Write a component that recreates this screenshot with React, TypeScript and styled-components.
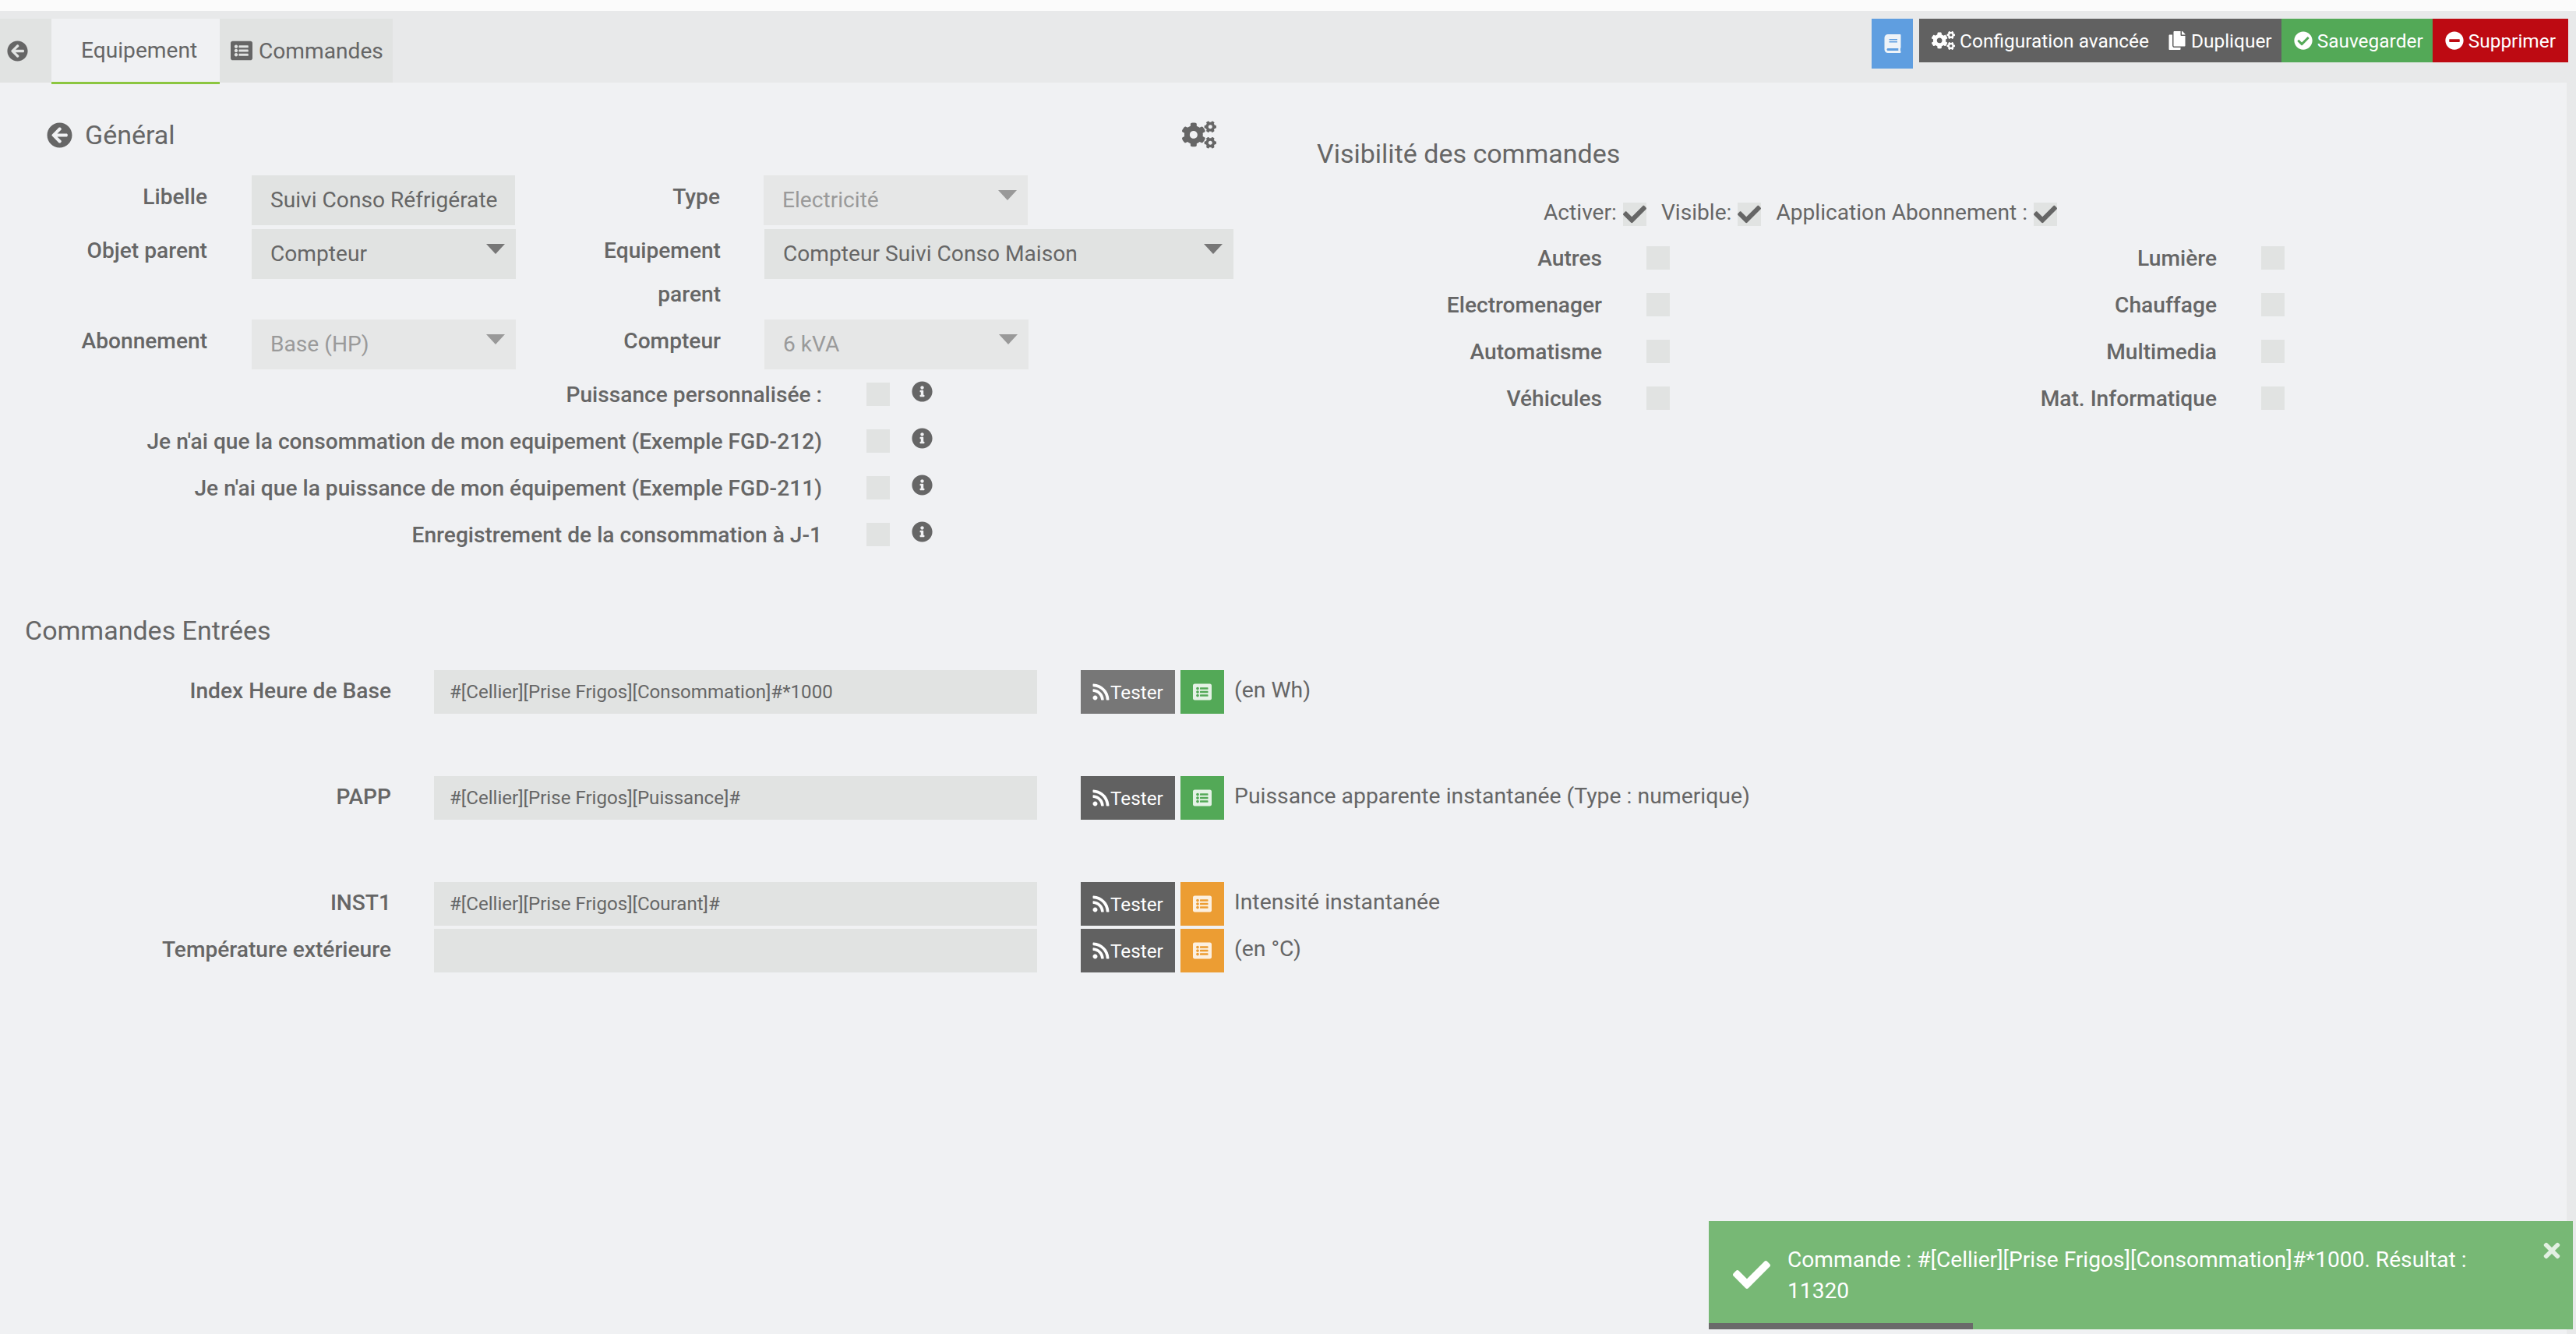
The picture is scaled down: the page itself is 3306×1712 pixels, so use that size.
import React from 'react'
import styled, { createGlobalStyle } from 'styled-components'
import {
    FaArrowCircleLeft, FaBook, FaCheck, FaCheckCircle, FaCogs, FaCopy,
    FaInfoCircle, FaListAlt, FaMinusCircle, FaRss, FaTimes
} from 'react-icons/fa'

const GlobalStyle = createGlobalStyle`
    html, body {
        margin: 0;
        height: 100%;
        overflow: hidden;
        background: #e8e9ea;
        color: #666;
        font-family: Roboto, "Liberation Sans", sans-serif;
        font-size: 28.15px;
    }
    * {
        box-sizing: border-box;
    }
`

const infoRows = [
    'Puissance personnalisée :',
    "Je n'ai que la consommation de mon equipement (Exemple FGD-212)",
    "Je n'ai que la puissance de mon équipement (Exemple FGD-211)",
    'Enregistrement de la consommation à J-1'
]

const visibilityRows = [
    ['Autres', 'Lumière'],
    ['Electromenager', 'Chauffage'],
    ['Automatisme', 'Multimedia'],
    ['Véhicules', 'Mat. Informatique']
]

const commands = [
    { name: 'Index Heure de Base', value: '#[Cellier][Prise Frigos][Consommation]#*1000', help: '(en Wh)', ok: true, spaced: true, hover: true },
    { name: 'PAPP', value: '#[Cellier][Prise Frigos][Puissance]#', help: 'Puissance apparente instantanée (Type : numerique)', ok: true, spaced: true },
    { name: 'INST1', value: '#[Cellier][Prise Frigos][Courant]#', help: 'Intensité instantanée', ok: false },
    { name: 'Température extérieure', value: '', help: '(en °C)', ok: false }
]

const App = () => {
    return (
        <>
            <GlobalStyle />
            <TopStrip />
            <TopBar>
                <Tabs>
                    <BackTab><FaArrowCircleLeft size={27} /></BackTab>
                    <ActiveTab>Equipement</ActiveTab>
                    <Tab><FaListAlt size={28} />Commandes</Tab>
                </Tabs>
                <Actions>
                    <BookButton><FaBook size={24} /></BookButton>
                    <ActionButton $bg="#616161" $right={8}><FaCogs size={30} />Configuration avancée</ActionButton>
                    <ActionButton $bg="#616161"><FaCopy size={24} />Dupliquer</ActionButton>
                    <ActionButton $bg="#53a957"><FaCheckCircle size={24} />Sauvegarder</ActionButton>
                    <ActionButton $bg="#bd0a12" $right={16}><FaMinusCircle size={24} />Supprimer</ActionButton>
                </Actions>
            </TopBar>
            <Content>
                <TopSection>
                    <GeneralColumn>
                        <GeneralHeading>
                            <HeadingTitle><FaArrowCircleLeft size={33} />Général</HeadingTitle>
                            <FaCogs size={44} />
                        </GeneralHeading>
                        <FormRows>
                            <FormRow>
                                <FirstLabel>Libelle</FirstLabel>
                                <Field><FieldText>Suivi Conso Réfrigérateur</FieldText></Field>
                                <SecondLabel>Type</SecondLabel>
                                <Select $disabled>Electricité</Select>
                            </FormRow>
                            <FormRow $tall>
                                <FirstLabel>Objet parent</FirstLabel>
                                <Select>Compteur</Select>
                                <SecondLabel>Equipement parent</SecondLabel>
                                <Select $wide>Compteur Suivi Conso Maison</Select>
                            </FormRow>
                            <FormRow>
                                <FirstLabel>Abonnement</FirstLabel>
                                <Select $disabled>Base (HP)</Select>
                                <SecondLabel>Compteur</SecondLabel>
                                <Select $disabled>6 kVA</Select>
                            </FormRow>
                        </FormRows>
                        <InfoList>
                            {infoRows.map(label => (
                                <InfoRow key={label}>
                                    <InfoLabel>{label}</InfoLabel>
                                    <Checkbox />
                                    <InfoIcon><FaInfoCircle size={27} /></InfoIcon>
                                </InfoRow>
                            ))}
                        </InfoList>
                    </GeneralColumn>
                    <VisibilityColumn>
                        <SectionTitle>Visibilité des commandes</SectionTitle>
                        <ToggleRow>
                            <ToggleItem>Activer:<Checkbox><FaCheck size={30} /></Checkbox></ToggleItem>
                            <ToggleItem>Visible:<Checkbox><FaCheck size={30} /></Checkbox></ToggleItem>
                            <ToggleItem>Application Abonnement :<Checkbox><FaCheck size={30} /></Checkbox></ToggleItem>
                        </ToggleRow>
                        <VisibilityGrid>
                            {visibilityRows.flat().map(label => (
                                <VisibilityCell key={label}>
                                    <strong>{label}</strong>
                                    <Checkbox />
                                </VisibilityCell>
                            ))}
                        </VisibilityGrid>
                    </VisibilityColumn>
                </TopSection>
                <CommandSection>
                    <SectionTitle>Commandes Entrées</SectionTitle>
                    <CommandList>
                        {commands.map(cmd => (
                            <CommandRow key={cmd.name} $spaced={cmd.spaced}>
                                <CommandLabel>{cmd.name}</CommandLabel>
                                <CommandInput>{cmd.value}</CommandInput>
                                <TestButton $hover={cmd.hover}><FaRss size={24} />Tester</TestButton>
                                <ListButton $ok={cmd.ok}><FaListAlt size={24} /></ListButton>
                                <CommandHelp>{cmd.help}</CommandHelp>
                            </CommandRow>
                        ))}
                    </CommandList>
                </CommandSection>
            </Content>
            <Toast>
                <ToastCheck><FaCheck size={48} /></ToastCheck>
                <ToastClose><FaTimes size={30} /></ToastClose>
                <ToastText>Commande : #[Cellier][Prise Frigos][Consommation]#*1000. Résultat : 11320</ToastText>
                <ToastProgress />
            </Toast>
        </>
    )
}

const TopStrip = styled.div`
    height: 14px;
    background: #fbfbfb;
`

const TopBar = styled.header`
    height: 92px;
    padding: 10px 10px 0 0;
    display: flex;
    justify-content: space-between;
    align-items: flex-start;
    background: #e8e9ea;
`

const Tabs = styled.nav`
    display: flex;
    height: 84px;
`

const Tab = styled.div`
    width: 222px;
    height: 82px;
    padding-left: 14px;
    display: flex;
    align-items: center;
    gap: 8px;
    background: #e1e3e2;
`

const BackTab = styled(Tab)`
    width: 66px;
    padding-left: 9px;
`

const ActiveTab = styled(Tab)`
    position: relative;
    z-index: 1;
    width: 216px;
    height: 84px;
    padding-left: 38px;
    background: #f0f1f3;
    border-bottom: 3px solid #8cc63f;
`

const Actions = styled.div`
    display: flex;
    align-items: flex-start;
`

const BookButton = styled.div`
    width: 53px;
    height: 64px;
    margin-right: 8px;
    display: flex;
    align-items: center;
    justify-content: center;
    background: #5f9ee0;
    color: #eef3f8;
`

const ActionButton = styled.div<{ $bg: string, $right?: number }>`
    height: 56px;
    padding: 0 ${props => props.$right ?? 12}px 0 16px;
    display: flex;
    align-items: center;
    gap: 6px;
    background: ${props => props.$bg};
    color: #fff;
    font-size: 24.45px;
    svg {
        flex: none;
    }
`

const Content = styled.main`
    height: 1606px;
    margin-right: 12px;
    background: #f0f1f3;
`

const TopSection = styled.section`
    display: flex;
`

const GeneralColumn = styled.div`
    width: 1690px;
    padding-left: 60px;
`

const GeneralHeading = styled.div`
    width: 1501px;
    height: 50px;
    margin: 42px 0 27px;
    display: flex;
    justify-content: space-between;
    align-items: center;
`

const HeadingTitle = styled.div`
    display: flex;
    align-items: center;
    gap: 16px;
    font-size: 34px;
`

const FormRows = styled.div`
    display: flex;
    flex-direction: column;
    gap: 5px;
`

const FormRow = styled.div<{ $tall?: boolean }>`
    height: ${props => props.$tall ? '111px' : '64px'};
    display: flex;
    align-items: flex-start;
`

const FirstLabel = styled.label`
    width: 206px;
    margin-right: 57px;
    flex: none;
    font-weight: 500;
    line-height: 56px;
    text-align: right;
`

const SecondLabel = styled(FirstLabel)`
    width: 200px;
    margin: 0 56px 0 63px;
`

const Field = styled.div`
    width: 338px;
    height: 64px;
    padding: 0 23px 2px 24px;
    flex: none;
    display: flex;
    align-items: center;
    background: #e1e3e2;
`

const FieldText = styled.span`
    overflow: hidden;
    white-space: nowrap;
`

const Select = styled.div<{ $disabled?: boolean, $wide?: boolean }>`
    position: relative;
    width: ${props => props.$wide ? '602px' : '339px'};
    height: 64px;
    padding: 0 0 2px 24px;
    flex: none;
    display: flex;
    align-items: center;
    background: ${props => props.$disabled ? '#e6e7e7' : '#e1e3e2'};
    color: ${props => props.$disabled ? '#9a9a9a' : '#666'};
    &::after {
        content: '';
        position: absolute;
        top: 19px;
        right: 14px;
        border-style: solid;
        border-width: 13px 12px 0;
        border-color: ${props => props.$disabled ? '#999' : '#777'} transparent transparent;
    }
`

const InfoList = styled.div`
    margin-top: 2px;
`

const InfoRow = styled.div`
    height: 60px;
    display: flex;
    align-items: center;
`

const InfoLabel = styled.label`
    width: 995px;
    margin-right: 57px;
    font-weight: 500;
    text-align: right;
`

const Checkbox = styled.span`
    width: 30px;
    height: 30px;
    flex: none;
    display: inline-flex;
    align-items: center;
    justify-content: center;
    background: #e1e3e2;
    color: #666;
`

const InfoIcon = styled.span`
    margin: 0 0 7px 28px;
    display: flex;
`

const VisibilityColumn = styled.div`
    padding-top: 66px;
`

const SectionTitle = styled.h3`
    height: 50px;
    margin: 0;
    font-size: 34px;
    font-weight: 400;
    line-height: 50px;
`

const ToggleRow = styled.div`
    margin: 38px 0 11px;
    padding-left: 291px;
    display: flex;
    gap: 19px;
`

const ToggleItem = styled.div`
    display: flex;
    align-items: flex-start;
    gap: 8px;
    line-height: 26px;
`

const VisibilityGrid = styled.div`
    display: grid;
    grid-template-columns: 453px 789px;
    grid-auto-rows: 60px;
`

const VisibilityCell = styled.div`
    display: flex;
    justify-content: flex-end;
    align-items: center;
    gap: 57px;
    strong {
        font-weight: 500;
    }
`

const CommandSection = styled.section`
    margin-top: 68px;
    padding-left: 32px;
`

const CommandList = styled.div`
    margin-top: 26px;
`

const CommandRow = styled.div<{ $spaced?: boolean }>`
    height: 56px;
    margin-bottom: ${props => props.$spaced ? '80px' : '4px'};
    display: flex;
    align-items: center;
`

const CommandLabel = styled.label`
    width: 470px;
    margin: 0 55px 4px 0;
    font-weight: 500;
    text-align: right;
`

const CommandInput = styled.div`
    width: 774px;
    height: 56px;
    margin-right: 56px;
    padding-left: 20px;
    display: flex;
    align-items: center;
    background: #e1e3e2;
    font-size: 24.1px;
`

const TestButton = styled.div<{ $hover?: boolean }>`
    width: 121px;
    height: 56px;
    margin-right: 7px;
    padding-left: 14px;
    display: flex;
    align-items: center;
    background: ${props => props.$hover ? '#777' : '#616161'};
    color: #fff;
    font-size: 24.3px;
`

const ListButton = styled.div<{ $ok?: boolean }>`
    width: 56px;
    height: 56px;
    margin-right: 13px;
    display: flex;
    align-items: center;
    justify-content: center;
    background: ${props => props.$ok ? '#53a957' : '#ec9d33'};
    color: rgba(255, 255, 255, .85);
`

const CommandHelp = styled.span`
    margin-bottom: 6px;
    font-size: 28.35px;
`

const Toast = styled.aside`
    position: fixed;
    right: 4px;
    bottom: 6px;
    width: 1109px;
    height: 139px;
    padding: 30px 60px 0 101px;
    background: #77b875;
    color: #fff;
`

const ToastCheck = styled.span`
    position: absolute;
    left: 31px;
    top: 45px;
    display: flex;
`

const ToastClose = styled.span`
    position: absolute;
    right: 12px;
    top: 23px;
    display: flex;
    opacity: .8;
`

const ToastText = styled.div`
    line-height: 40px;
`

const ToastProgress = styled.div`
    position: absolute;
    left: 0;
    bottom: 0;
    width: 339px;
    height: 8px;
    background: #6a6a6a;
`

export default App
